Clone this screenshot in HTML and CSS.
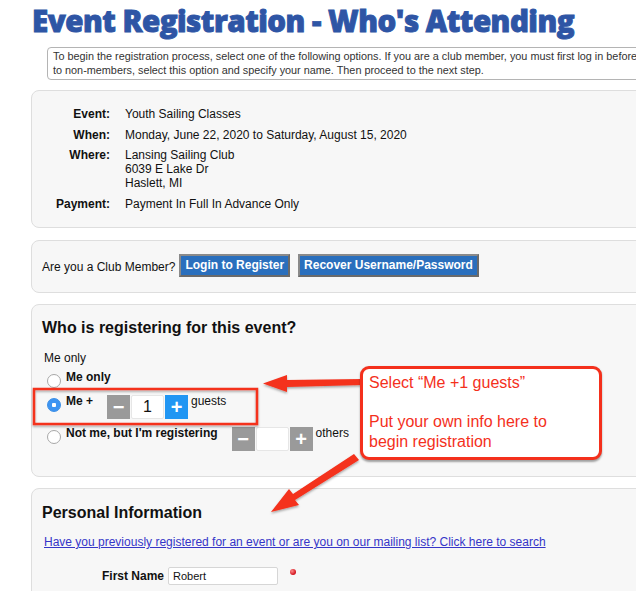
FILE: index.html
```html
<!DOCTYPE html>
<html>
<head>
<meta charset="utf-8">
<link rel="stylesheet" href="styles.css">
</head>
<body>
<div class="page">
  <h1 class="title">Event Registration - Who's Attending</h1>
  <div class="note">To begin the registration process, select one of the following options. If you are a club member, you must first log in before continuing. If registration is open<br>to non-members, select this option and specify your name. Then proceed to the next step.</div>

  <section class="panel details">
    <div class="dl">
      <div class="lbl">Event:</div><div class="val">Youth Sailing Classes</div>
      <div class="lbl">When:</div><div class="val">Monday, June 22, 2020 to Saturday, August 15, 2020</div>
      <div class="lbl">Where:</div><div class="val">Lansing Sailing Club<br>6039 E Lake Dr<br>Haslett, MI</div>
      <div class="lbl">Payment:</div><div class="val">Payment In Full In Advance Only</div>
    </div>
  </section>

  <section class="panel member">
    <span class="ask">Are you a Club Member?</span>
    <button class="btn">Login to Register</button>
    <button class="btn">Recover Username/Password</button>
  </section>

  <section class="panel who">
    <h2 class="heading">Who is registering for this event?</h2>
    <div class="sel">Me only</div>
    <div class="opt opt-first">
      <span class="radio"></span><span class="olbl">Me only</span>
    </div>
    <div class="opt">
      <span class="radio on"></span><span class="olbl">Me +</span>
      <div class="stepper">
        <span class="sbtn minus">−</span><span class="sval">1</span><span class="sbtn plus active">+</span>
      </div>
      <span class="unit">guests</span>
    </div>
    <div class="opt">
      <span class="radio"></span><span class="olbl">Not me, but I'm registering</span>
      <div class="stepper">
        <span class="sbtn minus">−</span><span class="sval"></span><span class="sbtn plus">+</span>
      </div>
      <span class="unit">others</span>
    </div>
  </section>

  <section class="panel personal">
    <h2 class="heading">Personal Information</h2>
    <a class="search" href="#">Have you previously registered for an event or are you on our mailing list? Click here to search</a>
    <div class="field">
      <span class="flbl">First Name</span>
      <span class="input">Robert</span>
      <span class="req"></span>
    </div>
  </section>

  <svg class="annot" width="636" height="591" viewBox="0 0 636 591">
    <defs>
      <filter id="sh" x="-20%" y="-20%" width="140%" height="140%">
        <feDropShadow dx="0" dy="1.5" stdDeviation="1.2" flood-color="#000" flood-opacity="0.35"/>
      </filter>
    </defs>
    <g filter="url(#sh)">
      <rect x="34" y="389" width="223" height="35" fill="none" stroke="#f4301c" stroke-width="2.5"/>
      <path d="M362 379 L287 380 L287 375 L263 383.5 L287 392 L287 387 L362 385 Z" fill="#f4301c"/>
      <path d="M354 454 L293 494 L289 489 L271 512 L299 505 L295 500 L359 460 Z" fill="#f4301c"/>
    </g>
  </svg>
  <div class="callout">Select “Me +1 guests”<br><br>Put your own info here to<br>begin registration</div>
</div>
</body>
</html>
```

FILE: styles.css
```css
html, body {
  margin: 0;
  padding: 0;
  overflow: hidden;
  background: #fff;
}
.page {
  position: relative;
  width: 636px;
  height: 591px;
  overflow: hidden;
  font-family: "Liberation Sans", Arial, sans-serif;
  font-size: 12px;
  color: #111;
}
.title {
  margin: 0;
  padding: 3px 0 0 32px;
  font-family: "Open Sans", "Roboto", sans-serif;
  font-weight: 800;
  font-size: 29.5px;
  letter-spacing: -0.5px;
  line-height: 36px;
  color: #2e55a5;
  -webkit-text-stroke: 0.9px #2e55a5;
  white-space: nowrap;
}
.note {
  margin: 8px 0 0 47px;
  width: 760px;
  height: 30px;
  box-sizing: content-box;
  border: 1px solid #b4b4b4;
  border-radius: 4px;
  padding: 1px 5px 0;
  font-size: 10.85px;
  line-height: 14px;
  color: #333;
  white-space: nowrap;
}
.panel {
  margin-left: 31px;
  width: 760px;
  background: #f7f7f7;
  border: 1px solid #dedede;
  border-radius: 8px;
  box-sizing: border-box;
}
.details {
  margin-top: 10px;
  height: 138px;
  padding: 16px 0 0 0;
}
.dl {
  display: grid;
  grid-template-columns: 69px auto;
  column-gap: 15px;
  row-gap: 6.5px;
  margin-left: 9px;
  line-height: 14px;
}
.lbl {
  font-weight: bold;
  text-align: right;
}
.member {
  margin-top: 12px;
  height: 53px;
  display: flex;
  align-items: center;
  padding-left: 10px;
}
.ask {
  margin-right: 4px;
}
.btn {
  height: 23px;
  margin: -3px 8px 0 0;
  padding: 0 4px;
  background: #2a6fbd;
  color: #fff;
  font-family: "Liberation Sans", Arial, sans-serif;
  font-weight: bold;
  font-size: 12px;
  border: 2px solid #6a6a6a;
  border-top-color: #8a8a8a;
  border-left-color: #8a8a8a;
}
.who {
  margin-top: 11px;
  height: 173px;
  padding: 13px 0 0 10px;
}
.heading {
  margin: 0;
  font-size: 16px;
  line-height: 20px;
  font-weight: bold;
  color: #111;
}
.sel {
  margin: 13px 0 0 2px;
  line-height: 14px;
}
.opt {
  display: flex;
  align-items: flex-start;
  margin-top: 8px;
  padding-left: 5px;
}
.opt-first {
  margin-top: 6px;
  height: 16px;
}
.radio {
  width: 12px;
  height: 12px;
  margin-top: 3px;
  border: 1px solid #a8a8a8;
  border-radius: 50%;
  background: #fff;
  box-sizing: content-box;
  flex: none;
}
.radio.on {
  border-color: #3a8ee6;
  background: radial-gradient(circle, #fff 0 2px, #3d94f2 2.5px);
}
.olbl {
  font-weight: bold;
  margin-left: 5px;
  line-height: 12px;
}
.stepper {
  display: flex;
  margin-left: 14px;
  height: 24px;
}
.sbtn {
  width: 23px;
  height: 24px;
  background: #9a9a9a;
  color: #fff;
  font-size: 20px;
  line-height: 24px;
  text-align: center;
  font-weight: bold;
}
.sbtn.active {
  background: #2196f3;
}
.sval {
  width: 31px;
  height: 22px;
  margin: 0 1px;
  background: #fff;
  border: 1px solid #e6e6e6;
  border-radius: 2px;
  font-size: 16px;
  line-height: 22px;
  text-align: center;
}
.unit {
  margin-left: 3px;
  line-height: 12px;
}
.personal {
  margin-top: 11px;
  height: 120px;
  padding: 14px 0 0 10px;
}
.search {
  display: inline-block;
  margin: 12px 0 0 2px;
  color: #3535c8;
  line-height: 14px;
  text-decoration: underline;
}
.field {
  display: flex;
  align-items: center;
  margin-top: 18px;
}
.flbl {
  width: 122px;
  text-align: right;
  font-weight: bold;
  margin-right: 4px;
}
.input {
  width: 104px;
  height: 16px;
  background: #fff;
  border: 1px solid #d6d6d6;
  border-radius: 2px;
  font-size: 11px;
  line-height: 16px;
  padding-left: 4px;
}
.req {
  width: 6px;
  height: 6px;
  margin: -8px 0 0 12px;
  border-radius: 50%;
  background: radial-gradient(circle at 35% 35%, #ff8a8a, #d0101a 70%);
}
.annot {
  position: absolute;
  left: 0;
  top: 0;
  pointer-events: none;
}
.callout {
  position: absolute;
  left: 360px;
  top: 366px;
  width: 230px;
  height: 84px;
  padding: 4px 0 0 6px;
  border: 3px solid #f4301c;
  border-radius: 9px;
  background: #fff;
  box-shadow: 0 1.5px 2px rgba(0,0,0,0.35);
  color: #f4301c;
  font-family: "Liberation Sans", Arial, sans-serif;
  font-size: 16px;
  line-height: 19.5px;
}
```
